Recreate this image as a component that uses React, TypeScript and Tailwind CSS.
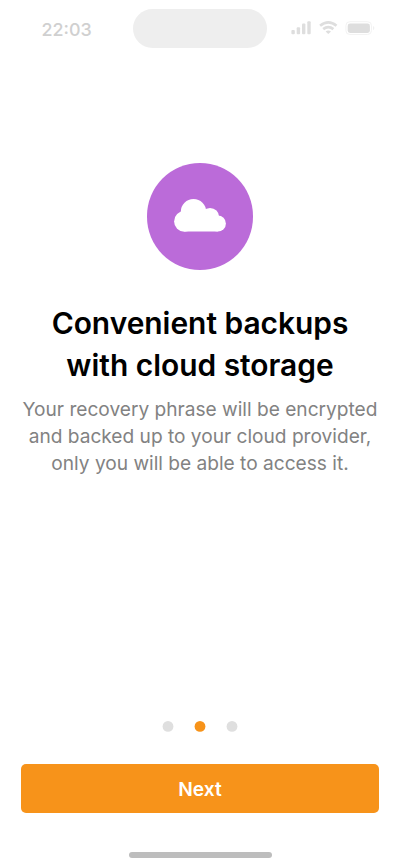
export default function App() {
  return (
    <main className="flex h-[866px] w-[400px] flex-col items-center overflow-hidden bg-white font-['Inter',sans-serif]">
      <header className="flex h-[60px] w-full shrink-0 items-start">
        <div className="w-[133.3px] pt-[18px] pl-[41.5px] text-[17.9px] leading-[24px] font-medium text-[#d0d0d0]">22:03</div>
        <div className="mt-[8.5px] h-[39.5px] w-[133.4px] rounded-full bg-[#eeeeee]" />
        <div className="pt-[20px] pl-[24.3px] text-[#dedede]">
          <svg width="86" height="16" viewBox="0 0 86 16" fill="none">
            <g fill="currentColor">
              <rect x="0.4" y="10" width="3.4" height="4.2" rx="1" />
              <rect x="5.7" y="7.2" width="3.4" height="7" rx="1" />
              <rect x="11" y="3.6" width="3.4" height="10.6" rx="1" />
              <rect x="16.3" y="1.2" width="3.4" height="13" rx="1" />
            </g>
            <g stroke="currentColor" strokeWidth="2.7">
              <path d="M29.1 5.7Q37.3 -1.1 45.5 5.7M32.2 9.1Q37.3 5 42.4 9.1" />
            </g>
            <path d="M34.6 11.5Q37.3 9.3 40 11.5L37.3 14.1Z" fill="currentColor" />
            <rect x="54.9" y="1.7" width="25.6" height="12.8" rx="4" stroke="#f3f3f3" />
            <rect x="56.7" y="3.5" width="22.2" height="9.4" rx="2.4" fill="currentColor" />
            <path d="M82 6v4.2a2.3 2.3 0 0 0 0-4.2Z" fill="#f0f0f0" />
          </svg>
        </div>
      </header>
      <div className="mt-[103.2px] flex size-[106.7px] shrink-0 items-center justify-center rounded-full bg-[#bb6bd9]">
        <svg width="52" height="35" viewBox="0 0 52 35" fill="white">
          <circle cx="10.4" cy="22.4" r="10.3" />
          <circle cx="19.5" cy="12.8" r="12.7" />
          <circle cx="36" cy="18.1" r="9.2" />
          <circle cx="43.8" cy="24.5" r="8.1" />
          <path d="M10.4 18H36l7.8 6v8.6H10.4Z" />
        </svg>
      </div>
      <h1 className="mt-[32.1px] text-center text-[29.9px] leading-[42px] font-semibold whitespace-nowrap text-black">Convenient backups<br />with cloud storage</h1>
      <p className="mt-[10.3px] text-center text-[19.12px] leading-[26.67px] font-normal whitespace-nowrap text-[#828282]">Your recovery phrase will be encrypted<br />and backed up to your cloud provider,<br />only you will be able to access it.</p>
      <svg className="mt-auto shrink-0" width="76" height="12" viewBox="0 0 76 12">
        <circle cx="6" cy="6.4" r="5.4" fill="#dfdfdf" />
        <circle cx="38" cy="6.4" r="5.4" fill="#f7931a" />
        <circle cx="70" cy="6.4" r="5.4" fill="#dfdfdf" />
      </svg>
      <button className="mt-[32px] h-[49px] w-[357.3px] shrink-0 rounded-[5px] bg-[#f7931a] pt-[2px] text-[19.2px] font-semibold text-white">Next</button>
      <div className="mt-[39.3px] mb-[8.4px] h-[5.3px] w-[143px] shrink-0 rounded-full bg-[#bdbdbd]" />
    </main>
  );
}
